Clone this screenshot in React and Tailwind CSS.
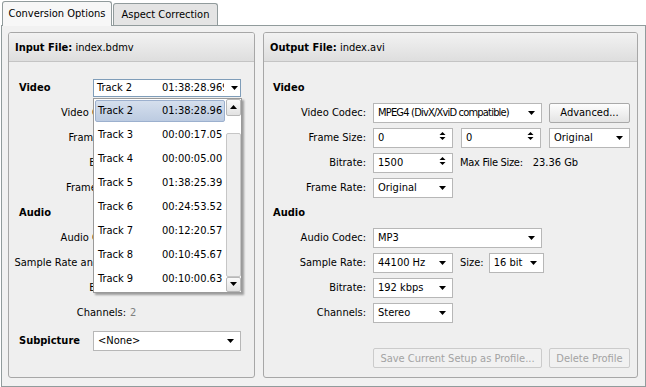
import React from "react";

const Arrow = () => (
  <svg width="7" height="4" viewBox="0 0 7 4" className="shrink-0">
    <path d="M0 0H7L3.5 4Z" fill="#000" />
  </svg>
);

const UpArrow = () => (
  <svg width="7" height="4" viewBox="0 0 7 4" className="shrink-0">
    <path d="M0 4H7L3.5 0Z" fill="#000" />
  </svg>
);

const SpinArrows = () => (
  <svg width="7" height="10" viewBox="0 0 7 10" className="shrink-0 mb-[3px]">
    <path d="M0.5 4H6.5L3.5 1Z" fill="#000" />
    <path d="M0.5 6H6.5L3.5 9Z" fill="#000" />
  </svg>
);

function Select({ className, text, textClass = "" }) {
  return (
    <div
      className={
        "flex items-center justify-between h-[20px] border border-[#b7b7b7] bg-white pl-[4px] pr-[6px] " +
        className
      }
    >
      <span className={"whitespace-nowrap " + textClass}>{text}</span>
      <Arrow />
    </div>
  );
}

function Spin({ text }) {
  return (
    <div className="flex items-center justify-between h-[20px] w-[80px] border border-[#b7b7b7] bg-white pl-[4px] pr-[6px]">
      <span>{text}</span>
      <SpinArrows />
    </div>
  );
}

function Button({ children, className, disabled }) {
  return (
    <div
      className={
        (disabled
          ? "text-[#a3a3a3] border-[#cbcbcb] bg-[#f1f1f1] "
          : "text-black border-[#a9a9a9] bg-linear-to-b from-[#fdfdfd] to-[#e4e4e4] ") +
        "flex items-center justify-center h-[20px] border rounded-[2px] whitespace-nowrap " +
        className
      }
    >
      {children}
    </div>
  );
}

const tracks = [
  ["Track 2", "01:38:28.96"],
  ["Track 3", "00:00:17.05"],
  ["Track 4", "00:00:05.00"],
  ["Track 5", "01:38:25.39"],
  ["Track 6", "00:24:53.52"],
  ["Track 7", "00:12:20.57"],
  ["Track 8", "00:10:45.67"],
  ["Track 9", "00:10:00.63"],
];

function TrackList() {
  return (
    <div className="absolute top-[18px] left-[-1px] z-20 w-[149px] h-[195px] border border-[#9a9a9a] bg-white flex shadow-[2px_2px_2px_rgba(0,0,0,0.35)]">
      <div className="flex-1 flex flex-col">
        {tracks.map(([t, d], i) => (
          <div key={t} className="h-[24px] p-px">
            <div
              className={
                (i === 0
                  ? "border-[#9cb0ce] bg-linear-to-b from-[#d5dfed] to-[#bccbe1] "
                  : "border-transparent ") +
                "h-full flex items-center border rounded-[2px] pl-[2px]"
              }
            >
              <span className="w-[64px] whitespace-nowrap">{t}</span>
              <span className="whitespace-nowrap">{d}</span>
            </div>
          </div>
        ))}
      </div>
      <div className="w-[15px] flex flex-col">
        <div className="h-[17px] flex items-center justify-center border border-[#b8b8b8] rounded-[2px] bg-linear-to-b from-[#fafafa] to-[#e2e2e2]">
          <UpArrow />
        </div>
        <div className="h-[17px] bg-white" />
        <div className="flex-1 border border-[#c6c6c6] rounded-[2px] bg-[#eeeeee]" />
        <div className="h-[15px] flex items-center justify-center border border-[#b8b8b8] rounded-[2px] bg-linear-to-b from-[#fafafa] to-[#e2e2e2]">
          <Arrow />
        </div>
      </div>
    </div>
  );
}

function InfoRow({ label, value }) {
  return (
    <div className="flex items-center h-[25px]">
      <div className="w-[117px] text-right whitespace-nowrap">{label}</div>
      {value ? (
        <div className="ml-[4px] text-[#808080] whitespace-nowrap">{value}</div>
      ) : null}
    </div>
  );
}

function Row({ label, children }) {
  return (
    <div className="flex items-center h-[25px]">
      <div className="w-[102px] text-right whitespace-nowrap">{label}</div>
      <div className="ml-[7px] flex items-center">{children}</div>
    </div>
  );
}

function PanelHeader({ title, value }) {
  return (
    <div className="h-[29px] shrink-0 border-b border-[#c4c4c4] bg-linear-to-b from-[#f2f2f2] to-[#dedede] flex items-center pl-[6px] rounded-t-[2px] whitespace-nowrap">
      <span className="font-bold">{title}</span>
      <span>&nbsp;{value}</span>
    </div>
  );
}

export default function App() {
  return (
    <div className="w-[646px] h-[387px] bg-white overflow-hidden text-[11px] leading-[13px] text-black [font-family:'DejaVu_Sans_Condensed','Liberation_Sans',sans-serif]">
      <div className="flex items-end h-[25px] pl-[2px]">
        <div className="relative z-10 -mb-px h-[25px] w-[110px] border border-b-0 border-[#919b9c] rounded-t-[3px] bg-[#f7f7f7] flex items-center justify-center pb-[1px] whitespace-nowrap">
          Conversion Options
        </div>
        <div className="ml-px h-[22px] w-[105px] border border-b-0 border-[#919b9c] rounded-t-[3px] bg-[#e4e4e4] flex items-center justify-center whitespace-nowrap">
          Aspect Correction
        </div>
      </div>
      <div className="ml-px w-[645px] h-[362px] border border-[#919b9c] bg-[#f1f1f1] pt-[6px] pl-[6px] flex gap-[8px]">
        {/* Input panel */}
        <div className="relative w-[247px] h-[346px] border border-[#a7a7a7] rounded-[3px] bg-[#efefef] flex flex-col">
          <PanelHeader title="Input File:" value="index.bdmv" />
          <div className="pt-[13px] flex flex-col">
            <div className="flex items-center h-[25px]">
              <div className="w-[84px] pl-[10px] font-bold">Video</div>
              <div className="relative w-[148px] h-[18px] border border-[#7f9db9] bg-white flex items-center">
                <span className="pl-[3px] w-[68px] whitespace-nowrap">Track 2</span>
                <span className="w-[62px] overflow-hidden whitespace-nowrap">01:38:28.969</span>
                <span className="ml-auto pr-[2px] flex items-center">
                  <Arrow />
                </span>
                <TrackList />
              </div>
            </div>
            <InfoRow label="Video Codec:" />
            <InfoRow label="Frame Size:" />
            <InfoRow label="Bitrate:" />
            <InfoRow label="Frame Rate:" />
            <div className="flex items-center h-[25px] pl-[10px] font-bold">Audio</div>
            <InfoRow label="Audio Codec:" />
            <InfoRow label="Sample Rate and Size:" />
            <InfoRow label="Bitrate:" />
            <InfoRow label="Channels:" value="2" />
            <div className="flex items-center h-[25px] mt-[3px]">
              <div className="w-[84px] pl-[10px] font-bold">Subpicture</div>
              <Select className="w-[148px] h-[19px]" text="<None>" />
            </div>
          </div>
        </div>

        {/* Output panel */}
        <div className="w-[375px] h-[346px] border border-[#a7a7a7] rounded-[3px] bg-[#efefef] flex flex-col">
          <PanelHeader title="Output File:" value="index.avi" />
          <div className="pt-[13px] flex flex-col">
            <div className="flex items-center h-[25px] pl-[9px] font-bold">Video</div>
            <Row label="Video Codec:">
              <Select
                className="w-[169px]"
                text="MPEG4 (DivX/XviD compatible)"
                textClass="tracking-[-0.8px]"
              />
              <Button className="ml-[7px] w-[81px]">Advanced...</Button>
            </Row>
            <Row label="Frame Size:">
              <Spin text="0" />
              <div className="ml-[8px]">
                <Spin text="0" />
              </div>
              <Select className="ml-[8px] w-[81px]" text="Original" />
            </Row>
            <Row label="Bitrate:">
              <Spin text="1500" />
              <span className="ml-[7px] whitespace-nowrap tracking-[-0.3px]">Max File Size:</span>
              <span className="ml-[10px] whitespace-nowrap">23.36 Gb</span>
            </Row>
            <Row label="Frame Rate:">
              <Select className="w-[80px]" text="Original" />
            </Row>
            <div className="flex items-center h-[25px] pl-[9px] font-bold">Audio</div>
            <Row label="Audio Codec:">
              <Select className="w-[169px]" text="MP3" />
            </Row>
            <Row label="Sample Rate:">
              <Select className="w-[80px]" text="44100 Hz" />
              <span className="ml-[7px]">Size:</span>
              <Select className="ml-[5px] w-[55px]" text="16 bit" />
            </Row>
            <Row label="Bitrate:">
              <Select className="w-[80px]" text="192 kbps" />
            </Row>
            <Row label="Channels:">
              <Select className="w-[80px]" text="Stereo" />
            </Row>
            <div className="flex mt-[23px] pl-[109px]">
              <Button disabled className="w-[169px]">
                Save Current Setup as Profile...
              </Button>
              <Button disabled className="ml-[7px] w-[81px]">
                Delete Profile
              </Button>
            </div>
          </div>
        </div>
      </div>
    </div>
  );
}
